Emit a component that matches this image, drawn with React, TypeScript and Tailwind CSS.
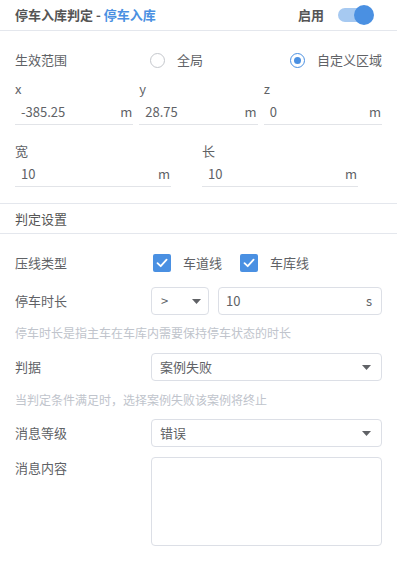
import React from 'react';

const font = { fontFamily: '"Noto Sans CJK SC", "Noto Sans", sans-serif' };

function Caret() {
  return (
    <svg width="9" height="5" viewBox="0 0 9 5" className="shrink-0">
      <path d="M0 0h9L4.5 5z" fill="#606266" />
    </svg>
  );
}

function Check() {
  return (
    <span className="flex h-[18px] w-[18px] items-center justify-center rounded-[2px] bg-[#4a90e2]">
      <svg width="12" height="10" viewBox="0 0 12 10">
        <path d="M1.5 5.2l3.2 3L10.6 1.6" fill="none" stroke="#fff" strokeWidth="1.8" strokeLinecap="round" strokeLinejoin="round" />
      </svg>
    </span>
  );
}

function UnitInput({ value, unit }: { value: string; unit: string }) {
  return (
    <div className="flex h-[25px] items-center justify-between border-b border-[#e2e4e8] pl-[6px] pr-[1px] text-[13px] text-[#606266]">
      <span>{value}</span>
      <span>{unit}</span>
    </div>
  );
}

function SelectBox({ value }: { value: string }) {
  return (
    <div className="flex h-[28px] flex-1 items-center justify-between rounded-[4px] border border-[#dcdfe6] pl-[8px] pr-[10px] text-[13px] text-[#606266]">
      <span>{value}</span>
      <Caret />
    </div>
  );
}

export default function App() {
  return (
    <div className="h-[563px] w-[397px] overflow-hidden bg-white" style={font}>
      {/* Header */}
      <div className="flex h-[31px] items-center justify-between border-b border-[#e4e7ed] pl-[15px] pr-[25px]">
        <div className="text-[13px] font-bold text-[#555]">
          停车入库判定 - <span className="text-[#4a90e2]">停车入库</span>
        </div>
        <div className="flex items-center gap-[14px]">
          <span className="text-[13px] font-bold text-[#555]">启用</span>
          <div className="relative h-[14px] w-[34px] rounded-full bg-[#a6c9f1]">
            <span className="absolute right-[-2px] top-[-3px] h-[20px] w-[20px] rounded-full bg-[#4a90e2]" />
          </div>
        </div>
      </div>

      <div className="px-[15px]">
        {/* Scope */}
        <div className="mt-[15px] flex h-[28px] items-center text-[13px] text-[#606266]">
          <span className="w-[135px]">生效范围</span>
          <span className="h-[15px] w-[15px] rounded-full border border-[#c4c7cc]" />
          <span className="ml-[12px]">全局</span>
          <span className="ml-auto flex h-[15px] w-[15px] items-center justify-center rounded-full border-[1.5px] border-[#4a90e2]">
            <span className="h-[7px] w-[7px] rounded-full bg-[#4a90e2]" />
          </span>
          <span className="ml-[12px]">自定义区域</span>
        </div>

        {/* xyz */}
        <div className="mt-[5px] grid grid-cols-3 gap-x-[6px] text-[13px] text-[#606266]">
          <div className="flex h-[20px] items-center">x</div>
          <div className="flex h-[20px] items-center">y</div>
          <div className="flex h-[20px] items-center">z</div>
          <div className="mt-[1px]"><UnitInput value="-385.25" unit="m" /></div>
          <div className="mt-[1px]"><UnitInput value="28.75" unit="m" /></div>
          <div className="mt-[1px]"><UnitInput value="0" unit="m" /></div>
        </div>

        {/* size */}
        <div className="mt-[16px] flex gap-[31px] text-[13px] text-[#606266]">
          <div className="w-[156px]">
            <div className="flex h-[20px] items-center">宽</div>
            <div className="mt-[1px]"><UnitInput value="10" unit="m" /></div>
          </div>
          <div className="w-[156px]">
            <div className="flex h-[20px] items-center">长</div>
            <div className="mt-[1px]"><UnitInput value="10" unit="m" /></div>
          </div>
        </div>
      </div>

      {/* Judge settings */}
      <div className="mt-[16px] flex h-[31px] items-center border-y border-[#e4e7ed] px-[15px] text-[13px] text-[#555]">
        判定设置
      </div>

      <div className="px-[15px] text-[13px] text-[#606266]">
        <div className="mt-[16px] flex h-[26px] items-center">
          <span className="w-[138px]">压线类型</span>
          <Check />
          <span className="ml-[12px]">车道线</span>
          <span className="ml-[18px]"><Check /></span>
          <span className="ml-[12px]">车库线</span>
        </div>

        <div className="mt-[11px] flex items-center">
          <span className="w-[136px]">停车时长</span>
          <div className="flex flex-1 gap-[9px]">
            <div className="flex h-[28px] w-[58px] items-center justify-between rounded-[4px] border border-[#dcdfe6] pl-[9px] pr-[7px]">
              <span>&gt;</span>
              <Caret />
            </div>
            <div className="flex h-[28px] flex-1 items-center justify-between rounded-[4px] border border-[#dcdfe6] pl-[7px] pr-[9px]">
              <span>10</span>
              <span>s</span>
            </div>
          </div>
        </div>
        <div className="mt-[9px] flex h-[18px] items-center text-[12px] text-[#c0c4cc]">
          停车时长是指主车在车库内需要保持停车状态的时长
        </div>

        <div className="mt-[11px] flex items-center">
          <span className="w-[136px]">判据</span>
          <SelectBox value="案例失败" />
        </div>
        <div className="mt-[10px] flex h-[18px] items-center text-[12px] text-[#c0c4cc]">
          当判定条件满足时，选择案例失败该案例将终止
        </div>

        <div className="mt-[10px] flex items-center">
          <span className="w-[136px]">消息等级</span>
          <SelectBox value="错误" />
        </div>

        <div className="mt-[10px] flex items-start">
          <span className="w-[136px] pt-[1px]">消息内容</span>
          <div className="h-[89px] flex-1 rounded-[4px] border border-[#dcdfe6]" />
        </div>
      </div>
    </div>
  );
}
